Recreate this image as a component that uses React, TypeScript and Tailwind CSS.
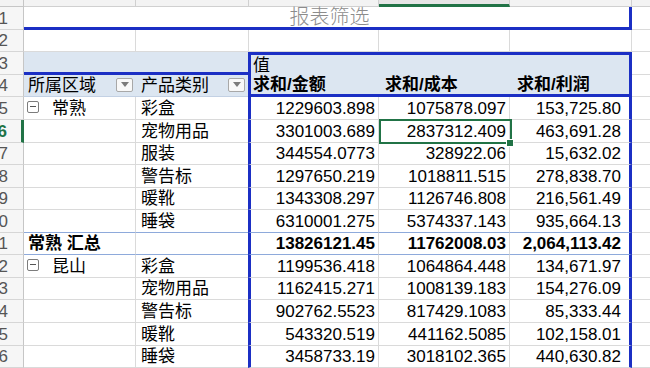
import React from 'react';

type DataRow = {
  n: number;
  h: string;
  region?: string;
  cat: string;
  c: string;
  d: string;
  e: string;
  total?: boolean;
  lineBelow?: boolean;
};

const dataRows: DataRow[] = [
  { n: 5, h: 'h-[23px]', region: '常熟', cat: '彩盒', c: '1229603.898', d: '1075878.097', e: '153,725.80' },
  { n: 6, h: 'h-[23px]', cat: '宠物用品', c: '3301003.689', d: '2837312.409', e: '463,691.28' },
  { n: 7, h: 'h-[22px]', cat: '服装', c: '344554.0773', d: '328922.06', e: '15,632.02' },
  { n: 8, h: 'h-[23px]', cat: '警告标', c: '1297650.219', d: '1018811.515', e: '278,838.70' },
  { n: 9, h: 'h-[22px]', cat: '暖靴', c: '1343308.297', d: '1126746.808', e: '216,561.49' },
  { n: 10, h: 'h-[23px]', cat: '睡袋', c: '6310001.275', d: '5374337.143', e: '935,664.13', lineBelow: true },
  { n: 11, h: 'h-[22px]', region: '常熟 汇总', cat: '', c: '13826121.45', d: '11762008.03', e: '2,064,113.42', total: true, lineBelow: true },
  { n: 12, h: 'h-[23px]', region: '昆山', cat: '彩盒', c: '1199536.418', d: '1064864.448', e: '134,671.97' },
  { n: 13, h: 'h-[22px]', cat: '宠物用品', c: '1162415.271', d: '1008139.183', e: '154,276.09' },
  { n: 14, h: 'h-[23px]', cat: '警告标', c: '902762.5523', d: '817429.1083', e: '85,333.44' },
  { n: 15, h: 'h-[23px]', cat: '暖靴', c: '543320.519', d: '441162.5085', e: '102,158.01' },
  { n: 16, h: 'h-[22px]', cat: '睡袋', c: '3458733.19', d: '3018102.365', e: '440,630.82' },
];

function Gutter({ n, active }: { n: number; active?: boolean }) {
  return (
    <div
      className={`w-[24px] shrink-0 flex justify-end items-center overflow-hidden bg-[#f6f6f6] border-b border-b-[#d6d6d6] ${
        active
          ? 'border-r-[3px] border-r-[#217346] text-[#217346] font-bold pr-[14px]'
          : 'border-r border-r-[#c6c6c6] text-[#555555] pr-[15px]'
      }`}
    >
      <span className="leading-[19px]">{n}</span>
    </div>
  );
}

function Dropdown() {
  return (
    <div className="ml-auto mr-[3px] -mt-[2px] w-[17px] h-[14px] shrink-0 border border-[#a8a8a8] bg-[#f8f8f8] rounded-[2px] flex items-center justify-center">
      <div className="w-0 h-0 border-l-[4px] border-r-[4px] border-t-[5px] border-l-transparent border-r-transparent border-t-[#7b7b7b]" />
    </div>
  );
}

function CollapseIcon() {
  return (
    <div className="w-[12px] h-[12px] -mt-[3px] shrink-0 border border-[#7c7c7c] rounded-[2px] bg-white flex items-center justify-center">
      <div className="w-[6px] h-[1px] bg-[#555555]" />
    </div>
  );
}

function Row({ r }: { r: DataRow }) {
  const line = r.lineBelow ? 'border-b-[#8eaadb]' : 'border-b-[#dadada]';
  const weight = r.total ? 'font-bold' : '';
  const selected = r.n === 6;
  return (
    <div className={`flex ${r.h}`}>
      <Gutter n={r.n} active={selected} />
      <div className={`w-[112px] shrink-0 flex items-center pl-[3px] border-b ${line} border-r border-r-[#dadada] ${weight}`}>
        {r.region && !r.total && <CollapseIcon />}
        {r.region && (
          <span className={`leading-[19px] whitespace-nowrap ${r.total ? 'pl-[1px]' : 'ml-[13px]'}`}>{r.region}</span>
        )}
      </div>
      <div className={`w-[112px] shrink-0 flex items-center pl-[5px] border-b ${line}`}>
        <span className="leading-[19px] whitespace-nowrap">{r.cat}</span>
      </div>
      <div className={`w-[131px] shrink-0 flex items-center justify-end pr-[3px] border-l-[3px] border-l-[#1b2fc4] border-r border-r-[#dadada] border-b ${line} ${weight}`}>
        <span className="leading-[19px]">{r.c}</span>
      </div>
      <div className={`relative w-[131px] shrink-0 flex items-center justify-end pr-[3px] border-r border-r-[#dadada] border-b ${line} ${weight}`}>
        <span className="leading-[19px]">{r.d}</span>
        {selected && (
          <>
            <div className="absolute left-0 -top-[1px] w-[133px] h-[25px] border-2 border-[#217346] z-10" />
            <div className="absolute left-[127px] top-[19px] w-[8px] h-[8px] bg-[#217346] border border-white z-20" />
          </>
        )}
      </div>
      <div className={`w-[122px] shrink-0 flex items-center justify-end pr-[8px] border-r-[3px] border-r-[#1b2fc4] border-b ${line} ${weight}`}>
        <span className="leading-[19px]">{r.e}</span>
      </div>
      <div className="flex-1 border-b border-b-[#dadada]" />
    </div>
  );
}

export default function App() {
  return (
    <div className="w-[650px] h-[368px] overflow-hidden bg-white text-[17px] text-black font-['Liberation_Sans','Noto_Sans_CJK_SC',sans-serif]">
      {/* column letters strip, scrolled off */}
      <div className="flex h-[7px] bg-[#f3f3f3]">
        <div className="w-[24px] shrink-0 border-r border-b border-[#c6c6c6]" />
        <div className="w-[112px] shrink-0 border-r border-b border-[#d0d0d0]" />
        <div className="w-[113px] shrink-0 border-r border-b border-[#d0d0d0]" />
        <div className="w-[130px] shrink-0 border-r border-b border-[#d0d0d0]" />
        <div className="w-[131px] shrink-0 border-r border-r-[#d0d0d0] border-b-[3px] border-b-[#217346] bg-[#e6e6e6]" />
        <div className="w-[122px] shrink-0 border-r border-b border-[#d0d0d0]" />
        <div className="flex-1 border-b border-[#d0d0d0]" />
      </div>

      {/* row 1: report filter title */}
      <div className="flex h-[23px]">
        <Gutter n={1} />
        <div className="w-[608px] shrink-0 flex items-center justify-center border-b-[3px] border-b-[#1b2fc4] border-r-[3px] border-r-[#1b2fc4]">
          <span className="text-[20px] font-light text-[#8c8c8c] leading-[20px] pl-[6px]">报表筛选</span>
        </div>
        <div className="flex-1 border-b border-b-[#dadada]" />
      </div>

      {/* row 2: blank */}
      <div className="flex h-[22px]">
        <Gutter n={2} />
        <div className="w-[112px] shrink-0 border-r border-b border-[#dadada]" />
        <div className="w-[113px] shrink-0 border-r border-b border-[#dadada]" />
        <div className="w-[130px] shrink-0 border-r border-b border-[#dadada]" />
        <div className="w-[131px] shrink-0 border-r border-b border-[#dadada]" />
        <div className="w-[122px] shrink-0 border-r border-b border-[#dadada]" />
        <div className="flex-1 border-b border-b-[#dadada]" />
      </div>

      {/* row 3: 值 */}
      <div className="flex h-[23px]">
        <Gutter n={3} />
        <div className="w-[224px] shrink-0 bg-[#dce6f1] border-b-[3px] border-b-[#1b2fc4]" />
        <div className="w-[384px] shrink-0 flex items-center pl-[2px] bg-[#dce6f1] border-t-[3px] border-l-[3px] border-r-[3px] border-[#1b2fc4]">
          <span className="leading-[19px]">值</span>
        </div>
        <div className="flex-1 border-b border-b-[#dadada]" />
      </div>

      {/* row 4: field headers */}
      <div className="flex h-[22px]">
        <Gutter n={4} />
        <div className="w-[112px] shrink-0 flex items-center pl-[4px] bg-[#dce6f1] border-b border-b-[#c3d1e4]">
          <span className="leading-[19px] whitespace-nowrap">所属区域</span>
          <Dropdown />
        </div>
        <div className="w-[112px] shrink-0 flex items-center pl-[5px] bg-[#dce6f1] border-b border-b-[#c3d1e4]">
          <span className="leading-[19px] whitespace-nowrap">产品类别</span>
          <Dropdown />
        </div>
        <div className="w-[131px] shrink-0 flex items-center pl-[2px] font-bold bg-[#dce6f1] border-l-[3px] border-l-[#1b2fc4] border-b-[3px] border-b-[#1b2fc4]">
          <span className="leading-[19px] whitespace-nowrap">求和/金额</span>
        </div>
        <div className="w-[131px] shrink-0 flex items-center pl-[6px] font-bold bg-[#dce6f1] border-b-[3px] border-b-[#1b2fc4]">
          <span className="leading-[19px] whitespace-nowrap">求和/成本</span>
        </div>
        <div className="w-[122px] shrink-0 flex items-center pl-[7px] font-bold bg-[#dce6f1] border-r-[3px] border-r-[#1b2fc4] border-b-[3px] border-b-[#1b2fc4]">
          <span className="leading-[19px] whitespace-nowrap">求和/利润</span>
        </div>
        <div className="flex-1 border-b border-b-[#dadada]" />
      </div>

      {dataRows.map((r) => (
        <Row key={r.n} r={r} />
      ))}
    </div>
  );
}
